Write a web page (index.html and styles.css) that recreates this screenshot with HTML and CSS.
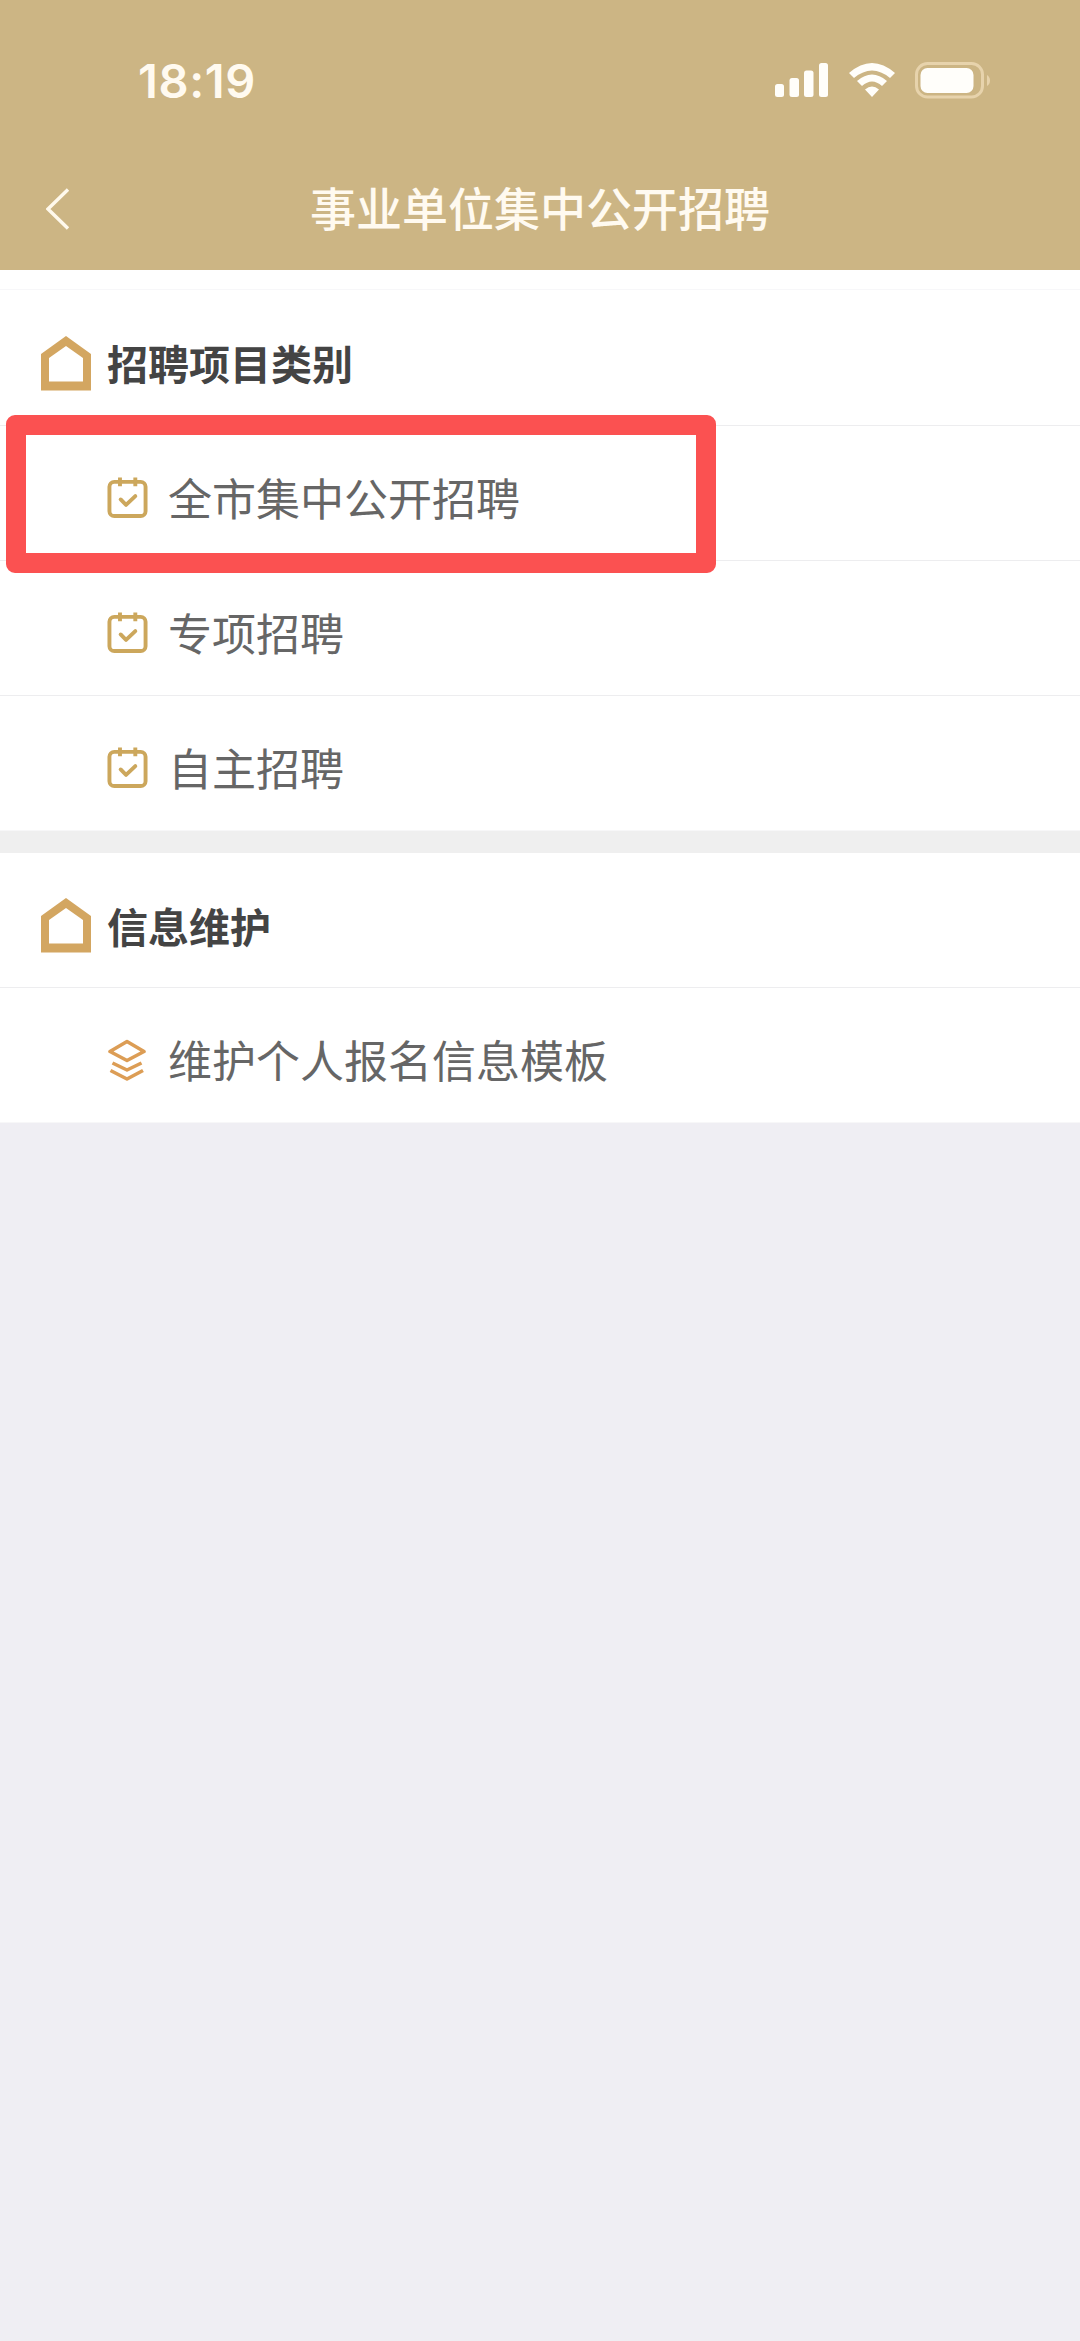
FILE: index.html
```html
<!DOCTYPE html>
<html lang="zh-CN">
<head>
<meta charset="utf-8">
<title>事业单位集中公开招聘</title>
<link rel="stylesheet" href="styles.css">
</head>
<body>
<svg width="0" height="0" class="defs">
  <symbol id="home" viewBox="0 0 50 55"><path fill="#d3a661" fill-rule="evenodd" d="M25 0 50 18V54.500H0V18ZM25 10 8 22V45.500H42V22Z"/></symbol>
  <symbol id="calendar" viewBox="0 0 42 42"><g fill="none" stroke="#cca75c" stroke-width="4" stroke-linejoin="round"><rect x="2.500" y="4.500" width="37" height="35" rx="5"/><path d="M13.300 0V9M29 0V9"/><path stroke-linecap="round" d="M14 22.500 19.500 28 29 19"/></g></symbol>
  <symbol id="layers" viewBox="0 0 40 42"><g fill="none" stroke="#dc9d55" stroke-width="3.600" stroke-linejoin="round"><path d="M19.500 2.500 36.500 12.500 19.500 21.500 2.500 12.500ZM5 24 19.500 31 34 24M3 31.500 19.500 40 35.500 31.500"/></g></symbol>
</svg>
<header class="header">
  <div class="status">
    <time class="clock">18:19</time>
    <div class="indicators">
      <svg class="signal" width="54" height="35" viewBox="0 0 54 35" fill="#fffefa"><rect y="21" width="9" height="13" rx="2.500"/><rect x="14.500" y="15" width="9.500" height="19" rx="2.500"/><rect x="29" y="7.500" width="9.500" height="26.500" rx="2.500"/><rect x="44" width="9" height="34" rx="2.500"/></svg>
      <svg class="wifi" width="46" height="35" viewBox="0 0 46 35" fill="#fffefa"><path d="M0 10Q23-10 46 10L41 15Q23 0 5 15ZM8 18Q23 5 38 18L33 23Q23 14 13 23ZM16 26.500Q23 20.500 30 26.500L23 34Z"/></svg>
      <svg class="battery" width="76" height="37" viewBox="0 0 76 37"><rect x="1.500" y="1.500" width="66" height="33.500" rx="11" fill="none" stroke="#e7d3ac" stroke-width="3"/><rect x="5.500" y="6" width="53" height="25" rx="7" fill="#fffefa"/><path d="M72 13Q75 15 75 18.500T72 24Z" fill="#e7d3ac"/></svg>
    </div>
  </div>
  <nav class="navbar">
    <svg class="back" width="24" height="42" viewBox="0 0 24 42"><path d="M22 1.500 2 21 22 40.500" fill="none" stroke="#fff9ec" stroke-width="3.400"/></svg>
    <h1 class="title">事业单位集中公开招聘</h1>
  </nav>
</header>
<main>
  <section class="group first">
    <h2 class="heading"><svg class="home"><use href="#home"/></svg><span>招聘项目类别</span></h2>
    <a class="item marked"><svg class="icon"><use href="#calendar"/></svg><span>全市集中公开招聘</span></a>
    <a class="item"><svg class="icon"><use href="#calendar"/></svg><span>专项招聘</span></a>
    <a class="item"><svg class="icon"><use href="#calendar"/></svg><span>自主招聘</span></a>
  </section>
  <section class="group">
    <h2 class="heading"><svg class="home"><use href="#home"/></svg><span>信息维护</span></h2>
    <a class="item"><svg class="icon"><use href="#layers"/></svg><span>维护个人报名信息模板</span></a>
  </section>
</main>
</body>
</html>
```
FILE: styles.css
```css
*, *::after { box-sizing: border-box; }
body {
  margin: 0;
  min-height: 2341px;
  background: #efeef3;
  font-family: "Noto Sans CJK SC", sans-serif;
}
.defs { display: none; }
svg { display: block; flex: none; }
.header { height: 270px; background: #ccb584; color: #fffaf0; }
.status {
  height: 160px;
  padding: 0 89px 0 138px;
  display: flex;
  justify-content: space-between;
}
.clock {
  padding-top: 52px;
  font: 600 47px/58px Inter, sans-serif;
  letter-spacing: 0.6px;
}
.indicators { display: flex; align-items: flex-start; padding-top: 62px; }
.signal { margin: 1px 20px 0 0; }
.wifi { margin: 1px 20px 0 0; }
.navbar { display: grid; grid-template-columns: 110px 1fr 110px; height: 98px; align-items: center; }
.back { margin-left: 46px; }
.title {
  margin: 0;
  padding-bottom: 6px;
  text-align: center;
  font-size: 46px;
  font-weight: 500;
  line-height: 66px;
}
.group { background: #fff; }
.group + .group { border-top: 22px solid #efefef; }
.first { padding-top: 19px; }
.first .heading { height: 137px; border-top: 1px solid #f7f7f9; }
.heading {
  display: flex;
  align-items: center;
  gap: 16px;
  height: 135px;
  margin: 0;
  padding: 11px 41px 0;
  border-bottom: 1px solid #ededef;
  color: #444;
  font-size: 41px;
  font-weight: 700;
}
.heading span { padding-bottom: 2px; }
.home { width: 50px; height: 55px; }
.item {
  position: relative;
  display: flex;
  align-items: center;
  gap: 20px;
  height: 135px;
  padding: 10px 40px 0 107px;
  border-bottom: 1px solid #ededef;
  color: #666;
  font-size: 44px;
}
.item span { padding-bottom: 3px; }
.item:last-child { border-bottom-color: #f7f7f8; }
.icon { width: 41px; height: 42px; }
.marked::after {
  content: "";
  position: absolute;
  left: 6px;
  top: -11px;
  width: 710px;
  height: 158px;
  border: 20px solid #fb5151;
  border-radius: 9px;
}
```
